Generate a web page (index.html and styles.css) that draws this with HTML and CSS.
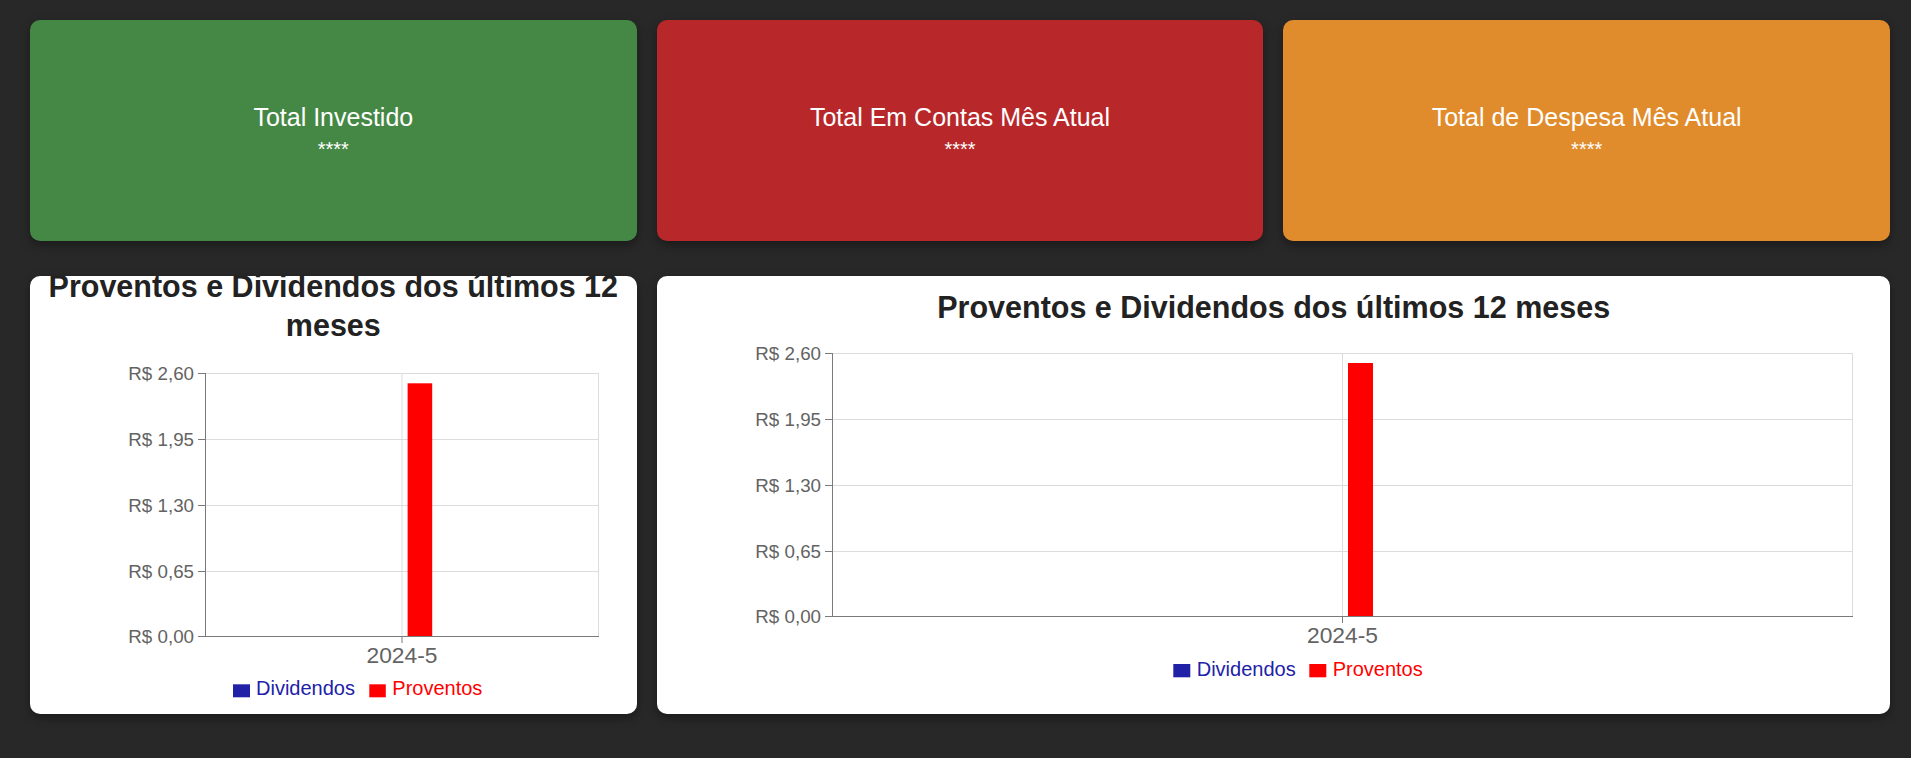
FILE: index.html
```html
<!DOCTYPE html>
<html lang="pt-BR">
<head>
<meta charset="utf-8">
<title>Dashboard</title>
<link rel="stylesheet" href="styles.css">
</head>
<body>
<main class="dashboard">
  <section class="stat-card stat-green">
    <h4 class="stat-title">Total Investido</h4>
    <div class="stat-value">****</div>
  </section>
  <section class="stat-card stat-red">
    <h4 class="stat-title">Total Em Contas Mês Atual</h4>
    <div class="stat-value">****</div>
  </section>
  <section class="stat-card stat-orange">
    <h4 class="stat-title">Total de Despesa Mês Atual</h4>
    <div class="stat-value">****</div>
  </section>

  <section class="chart-card">
    <svg class="chart" width="100%" height="438">
      <text class="chart-title" x="303.3" y="20.7" text-anchor="middle">Proventos e Dividendos dos últimos 12</text>
      <text class="chart-title" x="303.3" y="60" text-anchor="middle">meses</text>
      <g class="grid">
        <line x1="175" y1="97.5" x2="568.5" y2="97.5"/>
        <line x1="175" y1="163.5" x2="568.5" y2="163.5"/>
        <line x1="175" y1="229.5" x2="568.5" y2="229.5"/>
        <line x1="175" y1="295.5" x2="568.5" y2="295.5"/>
        <line x1="568.5" y1="97" x2="568.5" y2="361"/>
        <line x1="372" y1="97" x2="372" y2="361"/>
      </g>
      <rect class="bar-red" x="377.6" y="107.3" width="24.6" height="253.2"/>
      <g class="axis">
        <line x1="175.5" y1="97" x2="175.5" y2="361"/>
        <line x1="175" y1="360.5" x2="569" y2="360.5"/>
        <line x1="168" y1="97.5" x2="175" y2="97.5"/>
        <line x1="168" y1="163.5" x2="175" y2="163.5"/>
        <line x1="168" y1="229.5" x2="175" y2="229.5"/>
        <line x1="168" y1="295.5" x2="175" y2="295.5"/>
        <line x1="168" y1="360.5" x2="175" y2="360.5"/>
        <line x1="372" y1="361" x2="372" y2="367"/>
      </g>
      <g class="ylabels" text-anchor="end">
        <text x="164" y="103.5">R$ 2,60</text>
        <text x="164" y="169.5">R$ 1,95</text>
        <text x="164" y="235.5">R$ 1,30</text>
        <text x="164" y="301.5">R$ 0,65</text>
        <text x="164" y="366.5">R$ 0,00</text>
      </g>
      <text class="xlabel" x="372" y="386.7" text-anchor="middle">2024-5</text>
      <rect class="legend-blue" x="203" y="408.3" width="17" height="13"/>
      <text class="legend-text-blue" x="226" y="419">Dividendos</text>
      <rect class="bar-red" x="339.3" y="408.3" width="16.5" height="13"/>
      <text class="legend-text-red" x="362.3" y="419">Proventos</text>
    </svg>
  </section>

  <section class="chart-card chart-wide">
    <svg class="chart" width="100%" height="438">
      <text class="chart-title" x="616.7" y="42" text-anchor="middle">Proventos e Dividendos dos últimos 12 meses</text>
      <g class="grid">
        <line x1="175" y1="77.5" x2="1196" y2="77.5"/>
        <line x1="175" y1="143.5" x2="1196" y2="143.5"/>
        <line x1="175" y1="209.5" x2="1196" y2="209.5"/>
        <line x1="175" y1="275.5" x2="1196" y2="275.5"/>
        <line x1="1195.5" y1="77" x2="1195.5" y2="341"/>
        <line x1="685.5" y1="77" x2="685.5" y2="341"/>
      </g>
      <rect class="bar-red" x="691" y="87" width="25" height="253.5"/>
      <g class="axis">
        <line x1="175.5" y1="77" x2="175.5" y2="341"/>
        <line x1="175" y1="340.5" x2="1196" y2="340.5"/>
        <line x1="168" y1="77.5" x2="175" y2="77.5"/>
        <line x1="168" y1="143.5" x2="175" y2="143.5"/>
        <line x1="168" y1="209.5" x2="175" y2="209.5"/>
        <line x1="168" y1="275.5" x2="175" y2="275.5"/>
        <line x1="168" y1="340.5" x2="175" y2="340.5"/>
        <line x1="685.5" y1="341" x2="685.5" y2="347"/>
      </g>
      <g class="ylabels" text-anchor="end">
        <text x="164" y="83.5">R$ 2,60</text>
        <text x="164" y="149.5">R$ 1,95</text>
        <text x="164" y="215.5">R$ 1,30</text>
        <text x="164" y="281.5">R$ 0,65</text>
        <text x="164" y="346.5">R$ 0,00</text>
      </g>
      <text class="xlabel" x="685.5" y="367" text-anchor="middle">2024-5</text>
      <rect class="legend-blue" x="516.3" y="388" width="17" height="13.3"/>
      <text class="legend-text-blue" x="539.7" y="399.7">Dividendos</text>
      <rect class="bar-red" x="652.3" y="388" width="17" height="13.3"/>
      <text class="legend-text-red" x="675.7" y="399.7">Proventos</text>
    </svg>
  </section>
</main>
</body>
</html>
```

FILE: styles.css
```css
* {
  box-sizing: border-box;
}

html, body {
  margin: 0;
  padding: 0;
}

body {
  background: #282828;
  font-family: "Liberation Sans", Arial, sans-serif;
  color: #fff;
  height: 758px;
  overflow: hidden;
}

.dashboard {
  display: grid;
  grid-template-columns: repeat(3, 1fr);
  column-gap: 20px;
  row-gap: 35px;
  padding: 20px 21px 0 30px;
}

.stat-card {
  height: 221px;
  border-radius: 10px;
  display: flex;
  flex-direction: column;
  align-items: center;
  justify-content: center;
  box-shadow: 0 4px 10px rgba(0, 0, 0, 0.35);
  padding-top: 1.5px;
}

.stat-green { background: #458845; }
.stat-red { background: #b8282a; }
.stat-orange { background: #e08c2c; }

.stat-title {
  margin: 0 0 4.5px 0;
  font-size: 25px;
  font-weight: 400;
  line-height: 30px;
}

.stat-value {
  font-size: 20px;
  line-height: 24px;
}

.chart-card {
  height: 438px;
  background: #fff;
  border-radius: 10px;
  overflow: hidden;
  box-shadow: 0 4px 10px rgba(0, 0, 0, 0.35);
}

.chart-wide {
  grid-column: span 2;
}

.chart {
  display: block;
  font-family: "Liberation Sans", Arial, sans-serif;
}

.chart-title {
  font-size: 30.5px;
  font-weight: 700;
  fill: #222;
}

.grid line {
  stroke: #dcdcdc;
  stroke-width: 1;
}

.axis line {
  stroke: #7a7a7a;
  stroke-width: 1;
}

.ylabels text {
  font-size: 18.75px;
  fill: #636363;
}

.xlabel {
  font-size: 22.8px;
  fill: #636363;
}

.bar-red {
  fill: #ff0000;
}

.legend-blue {
  fill: #2121a8;
}

.legend-text-blue {
  font-size: 20px;
  fill: #2121a8;
}

.legend-text-red {
  font-size: 20px;
  fill: #ff0000;
}
```
